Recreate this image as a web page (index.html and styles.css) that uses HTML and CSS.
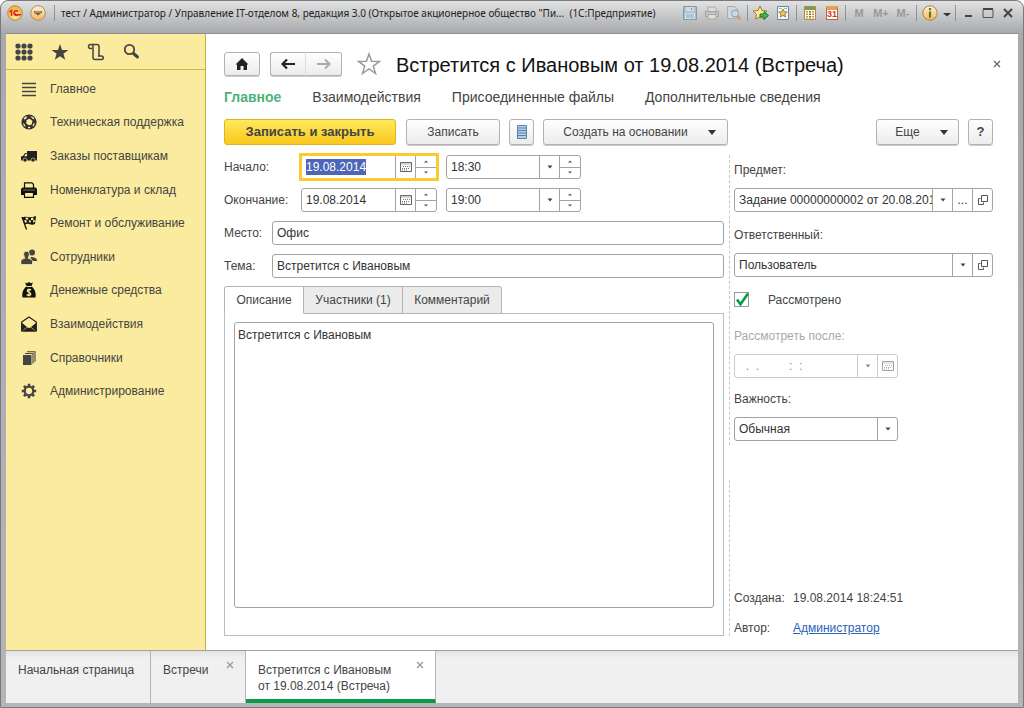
FILE: index.html
```html
<!DOCTYPE html>
<html lang="ru">
<head>
<meta charset="utf-8">
<title>Встретится с Ивановым от 19.08.2014 (Встреча)</title>
<link rel="stylesheet" href="styles.css">
</head>
<body>
<svg class="defs" aria-hidden="true">
  <symbol id="i-cal" viewBox="0 0 12 10"><path d="M.5 .5h11v9H.5z" fill="#fff" stroke="#666"/><path d="M1 2h10" stroke="#aaa"/><path d="M3 4.5h7M2 6.5h8M2 8h5" stroke="#777" stroke-dasharray="1 1"/></symbol>
  <symbol id="i-down" viewBox="0 0 6 4"><path d="M.5 .5h5L3 3.5z" fill="#444"/></symbol>
  <symbol id="i-sdown" viewBox="0 0 4 3"><path d="M0 .5h4L2 2.500z" fill="#555"/></symbol>
  <symbol id="i-sup" viewBox="0 0 4 3"><path d="M0 2.500h4L2 .5z" fill="#555"/></symbol>
  <symbol id="i-open" viewBox="0 0 10 10"><path d="M3.5 .5h6v6h-6z" fill="none" stroke="#555"/><path d="M2.500 3.500H.5v6h5V7.500" fill="none" stroke="#555"/></symbol>
  <symbol id="i-x" viewBox="0 0 8 8"><path d="M1 1l6 6M7 1L1 7" stroke="currentColor" stroke-width="1.300" fill="none"/></symbol>
</svg>
<div class="window">
  <header class="titlebar">
    <button class="tb logo" aria-label="1С"><svg width="16" height="16" viewBox="0 0 16 16"><defs><radialGradient id="gy" cx=".5" cy=".7"><stop offset="0" stop-color="#fff3a0"/><stop offset="1" stop-color="#f0b84a"/></radialGradient></defs><circle cx="8" cy="8" r="7.300" fill="url(#gy)" stroke="#b58a52"/><path d="M2.500 7l2-1.500V11M11 6.500a2.400 2.400 0 1 0 0 3.200M8.500 8.200a1 1 0 0 0 1 1.600H14" fill="none" stroke="#e0261c" stroke-width="1.500"/></svg></button>
    <button class="tb menu" aria-label="Меню"><svg width="16" height="16" viewBox="0 0 16 16"><defs><linearGradient id="go" x2="0" y2="1"><stop offset="0" stop-color="#fff2dc"/><stop offset="1" stop-color="#f3b55c"/></linearGradient></defs><circle cx="8" cy="8" r="7.300" fill="url(#go)" stroke="#b08a5e"/><path d="M4 6h8v1.500L8 10.500 4 7.500z" fill="#75583a"/><path d="M5 7h6" stroke="#e8cfa6"/></svg></button>
    <i class="sep"></i>
    <div class="caption">тест / Администратор / Управление IT-отделом 8, редакция 3.0 (Открытое акционерное общество "Пи...&nbsp; (1С:Предприятие)</div>
    <div class="tools">
      <button class="tb" aria-label="Сохранить"><svg width="16" height="16" viewBox="0 0 16 16"><path d="M1.500 1.500h13v13h-13z" fill="#a9c0cf" stroke="#7c9bb0"/><path d="M4 2h8v4.500H4z" fill="#cfdbe3"/><path d="M3 8h10v6H3z" fill="#d3dde3"/><path d="M4 10h8M4 12h8" stroke="#8fa9ba"/><path d="M9.500 3v2" stroke="#7896aa"/></svg></button>
      <button class="tb" aria-label="Печать"><svg width="16" height="16" viewBox="0 0 16 16"><path d="M4 6V2h7l1 1v3" fill="#dcdcdc" stroke="#aaa"/><path d="M1.500 6.500h13v5h-13z" fill="#c4c4c4" stroke="#a2a2a2"/><path d="M4 9.500h8V14H4z" fill="#e3dcd2" stroke="#a8a8a8"/><path d="M11 8h2" stroke="#d79c60"/></svg></button>
      <button class="tb" aria-label="Просмотр"><svg width="16" height="16" viewBox="0 0 16 16"><path d="M1.500 1.500h7l3 3v9h-10z" fill="#d4d7d9" stroke="#a5adb2"/><circle cx="9" cy="8.500" r="3.500" fill="#c6dae6" stroke="#8a9fae"/><path d="M11.500 11l3 3.500" stroke="#c39a72" stroke-width="2"/></svg></button>
      <i class="sep"></i>
      <button class="tb" aria-label="В избранное"><svg width="16" height="16" viewBox="0 0 16 16"><path d="M7 1l2 4.500 5 .5-3.500 3.500 1 4.500L7 12l-4.500 2 1-4.500L0 6l5-.5z" fill="#ffe79a" stroke="#a6762c"/><path d="M7 9h4V6.500l4.500 4-4.500 4V12H7z" fill="#3fb54a" stroke="#1c7a2b"/></svg></button>
      <button class="tb" aria-label="Избранное"><svg width="16" height="16" viewBox="0 0 16 16"><path d="M2.500 1.500h11v13h-11z" fill="#f4f8fb" stroke="#6888a4"/><path d="M4 3.500h3M9 3.500h3" stroke="#9ab3c8"/><path d="M8 4l1.200 2.800 3 .2-2.300 2 .8 3L8 10.400 5.300 12l.8-3-2.300-2 3-.2z" fill="#f6c65a" stroke="#8e6a28" stroke-width=".8"/></svg></button>
      <i class="sep"></i>
      <button class="tb" aria-label="Калькулятор"><svg width="16" height="16" viewBox="0 0 16 16"><path d="M2.500 1.500h11v13h-11z" fill="#fff6dc" stroke="#b28b4c"/><path d="M3 2h10v3H3z" fill="#6fa05a"/><path d="M5 6v8M11 6v8" stroke="#b87a3a" stroke-width="1.500" stroke-dasharray="1.500 1"/><path d="M8 6v8" stroke="#5c4630" stroke-width="1.500" stroke-dasharray="1.500 1"/></svg></button>
      <button class="tb day" aria-label="Календарь"><span class="day-box">31</span></button>
      <i class="sep"></i>
      <button class="tb mem">M</button>
      <button class="tb mem">M+</button>
      <button class="tb mem">M-</button>
      <i class="sep"></i>
      <button class="tb" aria-label="О программе"><svg width="16" height="16" viewBox="0 0 16 16"><circle cx="8" cy="8" r="7.200" fill="url(#go)" stroke="#a8834c"/><path d="M8 3v2.200M8 6.500V12.500" stroke="#5b7a2c" stroke-width="2.200"/></svg></button>
      <button class="tb narrow" aria-label="Ещё"><svg width="8" height="8" viewBox="0 0 8 8"><path d="M0 4h8L4 7.500z" fill="#333"/></svg></button>
      <i class="sep"></i>
      <button class="tb win" aria-label="Свернуть"><svg width="12" height="12" viewBox="0 0 12 12"><path d="M3 9h7" stroke="#444" stroke-width="2"/></svg></button>
      <button class="tb win" aria-label="Развернуть"><svg width="12" height="12" viewBox="0 0 12 12"><path d="M1 2.500h10v8H1z" fill="none" stroke="#555"/><path d="M1 2h10" stroke="#444" stroke-width="2"/></svg></button>
      <button class="tb win" aria-label="Закрыть"><svg width="12" height="12" viewBox="0 0 12 12"><path d="M2 2l8 8M10 2L2 10" stroke="#444" stroke-width="2"/></svg></button>
    </div>
  </header>

  <div class="client">
    <div class="work">
      <aside class="sidebar">
        <div class="quick">
          <button class="plain" aria-label="Разделы"><svg width="18" height="18" viewBox="0 0 18 18" fill="#444"><g id="r"><circle cx="3" cy="3" r="2.600"/><circle cx="9" cy="3" r="2.600"/><circle cx="15" cy="3" r="2.600"/></g><use href="#r" y="6"/><use href="#r" y="12"/></svg></button>
          <button class="plain" aria-label="Избранное"><svg width="18" height="18" viewBox="0 0 18 18"><path d="M9 1l2.100 5.900 6.300.1-5 3.800 1.800 6L9 13.200l-5.200 3.600 1.800-6-5-3.800 6.300-.1z" fill="#444"/></svg></button>
          <button class="plain" aria-label="История"><svg width="18" height="18" viewBox="0 0 18 18" fill="none" stroke="#444" stroke-width="1.500"><path d="M5 5.500H3.500a2 2 0 0 1 0-4H10a2 2 0 0 1 2 2v9.500h2.500a1.700 1.700 0 0 1 0 3.500H8a2 2 0 0 1-2-2v-11a2 2 0 0 0-2-2"/><path d="M12 13h-1"/></svg></button>
          <button class="plain" aria-label="Поиск"><svg width="18" height="18" viewBox="0 0 18 18" fill="none" stroke="#444"><circle cx="6.500" cy="6.500" r="4.700" stroke-width="1.800"/><path d="M10.500 10.500l4 3.500" stroke-width="3" stroke-linecap="round"/></svg></button>
        </div>
        <ul class="sections">
          <li><a href="#"><svg viewBox="0 0 16 16"><path d="M1 2.500h14M1 6.500h14M1 10.500h14M1 14.500h14" stroke="#444" stroke-width="1.600"/></svg>Главное</a></li>
          <li><a href="#"><svg viewBox="0 0 16 16"><circle cx="8" cy="8" r="7.600" fill="#333"/><path d="M8 4.800l1 .3 2.500 2-.8 3.400-2.700.7-2.700-1.500.2-3.400z" fill="#fcec9c"/><path d="M2.500 4.500l2-2 2 .2-2.500 3zM9.500 2l3 1.200 1.200 2.300-2.500-1zM13.800 9l-.8 2.800-1.500.6.500-2.400zM2 9l1.800 1.500.8 2.700-1.800-1.500zM7 13l2.500-.2-.8 1.500H7z" fill="#fcec9c"/></svg>Техническая поддержка</a></li>
          <li><a href="#"><svg viewBox="0 0 16 16"><path d="M6 3h10v9.500H0V8.500L2 8l2-3h2z" fill="#222"/><path d="M4.700 5.800H6v2.400H3.200z" fill="#fcec9c"/><circle cx="4" cy="12" r="2" fill="#222" stroke="#fcec9c" stroke-width=".6"/><circle cx="12" cy="12" r="2" fill="#222" stroke="#fcec9c" stroke-width=".6"/></svg>Заказы поставщикам</a></li>
          <li><a href="#"><svg viewBox="0 0 16 16"><path d="M3.500 6V.8h7.500L12.500 2.500V6" fill="#fcec9c" stroke="#111" stroke-width="1.200"/><path d="M1.500 5.500h13L16 7v6H0V7z" fill="#111"/><path d="M3.500 10.500h9v4.800h-9z" fill="#fcec9c" stroke="#111" stroke-width="1.200"/><path d="M2 8h12" stroke="#999" stroke-width=".7"/></svg>Номенклатура и склад</a></li>
          <li><a href="#"><svg viewBox="0 0 16 16"><path d="M1 2l4.500 12.500" stroke="#111" stroke-width="1.300"/><path d="M1.500 2.500C5 0 8 4 15 1l-1 8C10 11 7 7.500 4 9.500z" fill="#111"/><path d="M4.500 2.200l2.500.6.400 2-2.600-.4zM10 3l2.500-.4-.2 2.300-2.300.3zM3.300 5l2 .1.700 2.200-1.900.5zM7.600 5.200l2.200.3.100 2.300-2-.6zM12 5.500l2-.6-.3 2.200-1.700.7z" fill="#fcec9c"/></svg>Ремонт и обслуживание</a></li>
          <li><a href="#"><svg viewBox="0 0 16 16" fill="#444"><circle cx="11" cy="3.500" r="3"/><path d="M9.500 8c4 0 6.500 1 6.500 4h-5z"/><g stroke="#fcec9c" stroke-width=".8"><path d="M5.500 2.200c2.200 0 3 1.500 2.800 3.300C8.100 7.300 7.300 8 7.200 9.300c2.300.6 4.300 1.200 4.300 3.200V15.500H-.2v-3c0-2 1.800-2.600 4-3.200C3.700 8 2.900 7.300 2.700 5.500c-.2-1.800.6-3.300 2.800-3.300z"/></g></svg>Сотрудники</a></li>
          <li><a href="#"><svg viewBox="0 0 16 16"><path d="M4 .5l2 .7L8 0l2 1.200 2-.7-1.700 3.700C13 6 15.500 10 14.500 15.500h-13C.5 10 3 6 5.700 4.200z" fill="#111"/><path d="M5.500 4.500h5" stroke="#fcec9c"/><path d="M10.200 8C8 6.500 5.500 8 6.700 9.700c.9 1 3.400.8 3.200 2.500C9.600 14 7 13.800 5.700 12.500M8 6.500v8" fill="none" stroke="#fcec9c" stroke-width="1.200"/></svg>Денежные средства</a></li>
          <li><a href="#"><svg viewBox="0 0 16 16"><path d="M.7 6L8 1l7.300 5v9H.7z" fill="#fcec9c" stroke="#222" stroke-width="1.200"/><path d="M.5 6.500L6 11l-5.500 4.500zM15.500 6.500L10 11l5.500 4.500zM1 15.600l5.500-4.300L8 12.300l1.500-1L15 15.600z" fill="#222"/></svg>Взаимодействия</a></li>
          <li><a href="#"><svg viewBox="0 0 16 16"><path d="M2 5h8.500v10H2z" fill="#444"/><path d="M4 3.500h8v10M6 1.700h8v10" fill="none" stroke="#444" stroke-width="1.100"/></svg>Справочники</a></li>
          <li><a href="#"><svg viewBox="0 0 16 16"><circle cx="8" cy="8" r="4.300" fill="none" stroke="#444" stroke-width="2.300"/><path d="M8 .8v2.500M8 12.700v2.500M.8 8h2.500M12.700 8h2.500M2.900 2.900l1.800 1.800M11.300 11.300l1.800 1.800M13.100 2.900l-1.800 1.800M4.700 11.300l-1.800 1.800" stroke="#444" stroke-width="2.600"/></svg>Администрирование</a></li>
        </ul>
      </aside>

      <main class="form">
        <div class="head">
          <button class="btn home" aria-label="Домой"><svg width="14" height="14" viewBox="0 0 14 14"><path d="M7 1l6.500 6.500H12V13H8.500V9h-3v4H2V7.500H.5z" fill="#222"/></svg></button>
          <div class="pair">
            <button class="btn" aria-label="Назад"><svg width="14" height="12" viewBox="0 0 14 12"><path d="M1 6h13M6 1.500L1.500 6 6 10.500" stroke="#222" stroke-width="2.200" fill="none"/></svg></button>
            <button class="btn" aria-label="Вперед"><svg width="14" height="12" viewBox="0 0 14 12"><path d="M0 6h13M8 1.500L12.500 6 8 10.500" stroke="#aaa" stroke-width="2" fill="none"/></svg></button>
          </div>
          <button class="plain star" aria-label="Избранное"><svg width="24" height="24" viewBox="0 0 24 24"><path d="M12 2l2.600 7.200 7.900.2-6.200 4.700 2.200 7.400L12 17l-6.500 4.500 2.200-7.400L1.500 9.400l7.900-.2z" fill="#fff" stroke="#999" stroke-width="1.500"/></svg></button>
          <h1>Встретится с Ивановым от 19.08.2014 (Встреча)</h1>
          <button class="plain close" aria-label="Закрыть"><svg width="8" height="8"><use href="#i-x"/></svg></button>
        </div>
        <nav class="links">
          <a class="on" href="#">Главное</a><a href="#">Взаимодействия</a><a href="#">Присоединенные файлы</a><a href="#">Дополнительные сведения</a>
        </nav>
        <div class="commands">
          <button class="btn primary">Записать и закрыть</button>
          <button class="btn save">Записать</button>
          <button class="btn list" aria-label="Список"><svg width="12" height="16" viewBox="0 0 12 16"><path d="M1.500 1.500h9v13h-9z" fill="#b4d0e8" stroke="#5b83ab"/><path d="M2 4h8M2 6.500h8M2 9h8M2 11.500h8" stroke="#5b83ab"/></svg></button>
          <button class="btn create">Создать на основании<svg width="8" height="5" viewBox="0 0 8 5"><path d="M0 0h8L4 5z" fill="#333"/></svg></button>
          <button class="btn more">Еще<svg width="8" height="5" viewBox="0 0 8 5"><path d="M0 0h8L4 5z" fill="#333"/></svg></button>
          <button class="btn help">?</button>
        </div>

        <div class="body">
          <div class="left">
            <div class="row">
              <label class="wide" for="d1">Начало:</label>
              <div class="field date focus"><input id="d1" value="19.08.2014"><button class="cell cal" aria-label="Календарь"><svg width="12" height="10"><use href="#i-cal"/></svg></button><div class="spin"><button aria-label="Больше"><svg width="4" height="3"><use href="#i-sup"/></svg></button><button aria-label="Меньше"><svg width="4" height="3"><use href="#i-sdown"/></svg></button></div></div>
              <div class="field time"><input aria-label="Время начала" value="18:30"><button class="cell" aria-label="Выбрать"><svg width="6" height="4"><use href="#i-down"/></svg></button><div class="spin"><button aria-label="Больше"><svg width="4" height="3"><use href="#i-sup"/></svg></button><button aria-label="Меньше"><svg width="4" height="3"><use href="#i-sdown"/></svg></button></div></div>
            </div>
            <div class="row">
              <label class="wide" for="d2">Окончание:</label>
              <div class="field date"><input id="d2" value="19.08.2014"><button class="cell cal" aria-label="Календарь"><svg width="12" height="10"><use href="#i-cal"/></svg></button><div class="spin"><button aria-label="Больше"><svg width="4" height="3"><use href="#i-sup"/></svg></button><button aria-label="Меньше"><svg width="4" height="3"><use href="#i-sdown"/></svg></button></div></div>
              <div class="field time"><input aria-label="Время окончания" value="19:00"><button class="cell" aria-label="Выбрать"><svg width="6" height="4"><use href="#i-down"/></svg></button><div class="spin"><button aria-label="Больше"><svg width="4" height="3"><use href="#i-sup"/></svg></button><button aria-label="Меньше"><svg width="4" height="3"><use href="#i-sdown"/></svg></button></div></div>
            </div>
            <div class="row"><label for="place">Место:</label><div class="field grow"><input id="place" value="Офис"></div></div>
            <div class="row"><label for="subj">Тема:</label><div class="field grow"><input id="subj" value="Встретится с Ивановым"></div></div>
            <div class="tabs" role="tablist">
              <button class="tab on" role="tab">Описание</button><button class="tab" role="tab">Участники (1)</button><button class="tab" role="tab">Комментарий</button>
            </div>
            <div class="panel"><textarea aria-label="Описание">Встретится с Ивановым</textarea></div>
          </div>

          <div class="right">
            <div class="group props">
              <label for="item">Предмет:</label>
              <div class="field"><input id="item" value="Задание 00000000002 от 20.08.2014"><button class="cell" aria-label="Выбрать"><svg width="6" height="4"><use href="#i-down"/></svg></button><button class="cell dots">...</button><button class="cell" aria-label="Открыть"><svg width="10" height="10"><use href="#i-open"/></svg></button></div>
              <label for="resp">Ответственный:</label>
              <div class="field"><input id="resp" value="Пользователь"><button class="cell" aria-label="Выбрать"><svg width="6" height="4"><use href="#i-down"/></svg></button><button class="cell" aria-label="Открыть"><svg width="10" height="10"><use href="#i-open"/></svg></button></div>
              <label class="check"><span class="box"><input type="checkbox" checked><svg width="16" height="16" viewBox="0 0 16 16"><path d="M3 7.500l3.500 4.800L14 1.500" fill="none" stroke="#0a9a48" stroke-width="2.600"/></svg></span>Рассмотрено</label>
              <label class="off" for="after">Рассмотреть после:</label>
              <div class="field short disabled"><input id="after" value="  .  .         :  :" disabled><button class="cell" disabled aria-label="Выбрать"><svg width="6" height="4"><use href="#i-down"/></svg></button><button class="cell" disabled aria-label="Календарь"><svg width="12" height="10"><use href="#i-cal"/></svg></button></div>
              <label for="prio">Важность:</label>
              <div class="field short"><select id="prio"><option>Обычная</option></select><span class="cell"><svg width="6" height="4"><use href="#i-down"/></svg></span></div>
            </div>
            <div class="group meta">
              <dl><dt>Создана:</dt><dd>19.08.2014 18:24:51</dd><dt>Автор:</dt><dd><a href="#">Администратор</a></dd></dl>
            </div>
          </div>
        </div>
      </main>
    </div>

    <footer class="taskbar">
      <div class="task start"><span>Начальная страница</span></div>
      <div class="task list-task"><span>Встречи</span><button class="plain" aria-label="Закрыть"><svg width="8" height="8"><use href="#i-x"/></svg></button></div>
      <div class="task on"><span>Встретится с Ивановым<br>от 19.08.2014 (Встреча)</span><button class="plain" aria-label="Закрыть"><svg width="8" height="8"><use href="#i-x"/></svg></button></div>
    </footer>
  </div>
</div>
<script src="script.js"></script>
</body>
</html>
```
FILE: styles.css
```css
* { box-sizing: border-box; }
body { margin: 0; background: #fff; font: 12px/16px "Liberation Sans", Arial, sans-serif; color: #444; }
button, input, select, textarea { font: inherit; color: inherit; margin: 0; padding: 0; border: 0; border-radius: 0; background: none; }
input, textarea, select, button { outline: none; }
svg { display: block; flex: none; }
a { color: inherit; text-decoration: none; }
.defs { position: absolute; width: 0; height: 0; }

.window { min-height: 100vh; display: flex; flex-direction: column; padding: 0 5px 4px; border: 1px solid #77797c; border-radius: 8px 8px 0 0; background: linear-gradient(#e2e2e2, #a7a9ac 32px, #b4b5b7); }
.titlebar { display: flex; align-items: center; height: 32px; padding-bottom: 9px; font-size: 11px; color: #222; }
.tb { display: flex; align-items: center; justify-content: center; width: 22px; height: 22px; }
.logo { width: 17px; }
.menu { width: 29px; }
.sep { width: 1px; height: 16px; background: #8f9193; margin: 0 2px; }
.caption { flex: 1; min-width: 0; padding-left: 4px; font-family: "Noto Sans", sans-serif; font-size: 10px; white-space: nowrap; overflow: hidden; }
.tools { display: flex; align-items: center; }
.narrow { width: 12px; }
.win { width: 20px; }
.day-box { width: 12px; height: 14px; border: 1px solid #b06a3a; border-top: 4px solid #e8a04c; background: #fff; font-size: 9px; line-height: 9px; color: #d03a1c; font-weight: bold; text-align: center; }
.mem { font-weight: bold; color: #98999b; }

.client { flex: 1; display: flex; flex-direction: column; border-top: 1px solid #8c8e90; background: #fff; }
.work { flex: 1; display: flex; min-height: 0; }

.sidebar { width: 200px; background: #fbeb9e; border-right: 1px solid #c6ae3a; }
.quick { display: flex; gap: 18px; height: 36px; padding: 0 9px; align-items: center; border-bottom: 1px solid #d0b540; }
.sections { list-style: none; margin: 0; padding: 2px 0 0 15px; display: grid; grid-auto-rows: 1fr; height: 338px; }
.sections a { display: flex; align-items: center; gap: 13px; height: 100%; }
.sections svg { width: 16px; height: 16px; }

.form { flex: 1; min-width: 0; display: flex; flex-direction: column; padding: 18px 25px 14px 18px; }
.head { display: flex; align-items: center; height: 24px; }
.btn { display: flex; align-items: center; justify-content: center; border: 1px solid #b2b2b2; border-radius: 3px; background: linear-gradient(#fff, #ececec); box-shadow: 0 1px 0 #ccc; }
.head .btn { width: 36px; height: 24px; }
.pair { display: flex; margin: 0 15px 0 10px; }
.pair .btn:first-child { border-radius: 3px 0 0 3px; border-right-color: #ddd; }
.pair .btn:last-child { border-radius: 0 3px 3px 0; border-left: 0; }
h1 { flex: 1; margin: 2px 0 0 15px; font-size: 20px; line-height: 24px; font-weight: normal; color: #111; white-space: nowrap; }
.close { margin-right: -8px; color: #666; }
.links { display: flex; gap: 31px; margin-top: 12px; font-size: 14px; line-height: 18px; white-space: nowrap; }
.links .on { color: #4db27a; font-weight: bold; }
.commands { display: flex; margin-top: 13px; }
.commands .btn { height: 26px; margin-right: 9px; white-space: nowrap; }
.commands .primary { width: 172px; margin-right: 10px; border-color: #e0b420; background: linear-gradient(#ffe95c, #f9c81c); font-size: 13px; font-weight: bold; box-shadow: none; }
.commands .save { width: 94px; }
.commands .list { width: 25px; }
.commands .create { width: 185px; gap: 20px; padding-left: 8px; }
.commands .more { width: 83px; gap: 20px; margin-left: auto; padding-left: 8px; }
.commands .help { width: 25px; margin-right: 0; font-size: 13px; font-weight: bold; }

.body { flex: 1; display: flex; gap: 5px; margin-top: 10px; }
.left { flex: 1; min-width: 0; display: flex; flex-direction: column; gap: 9px; }
.row { display: flex; align-items: center; }
.row label { width: 48px; }
.row label.wide { width: 77px; }
.field { display: flex; height: 24px; border: 1px solid #a3a3a3; border-radius: 3px; background: #fff; color: #333; }
.field input, .field select { flex: 1; width: 0; min-width: 0; padding-left: 4px; appearance: none; }
.grow { flex: 1; }
.date { width: 136px; margin-right: 9px; }
.time { width: 135px; }
.focus { outline: 3px solid #fbcb2c; border-color: #fff; border-radius: 0; outline-offset: -1px; }
input::selection { background: #4c66b8; color: #fff; }
.cell { display: flex; align-items: center; justify-content: center; width: 20px; border-left: 1px solid #a3a3a3; }
.spin { display: flex; flex-direction: column; width: 21px; border-left: 1px solid #a3a3a3; }
.spin button { flex: 1; display: flex; align-items: center; justify-content: center; }
.spin button + button { border-top: 1px solid #a3a3a3; }

.tabs { display: flex; height: 28px; margin: -1px 0 -10px; z-index: 1; }
.tab { min-width: 99px; padding: 0 10px; border: 1px solid #b4b4b4; border-left: 0; background: #ebebeb; white-space: nowrap; }
.tab.on { min-width: 80px; border-left: 1px solid #b4b4b4; border-bottom-color: #fff; border-top-left-radius: 3px; background: #fff; }
.tab:last-child { border-top-right-radius: 3px; }
.panel { flex: 1; display: flex; padding: 8px 9px 27px; border: 1px solid #bdbdbd; }
textarea { flex: 1; resize: none; padding: 4px 3px; border: 1px solid #a3a3a3; border-radius: 3px; color: #333; }

.right { width: 264px; display: flex; flex-direction: column; justify-content: space-between; }
.group { border-left: 1px dashed #c8c8c8; padding-left: 4px; }
.props { display: flex; flex-direction: column; padding-top: 7px; padding-bottom: 4px; }
.props .field { margin: 10px 0 15px; }
.props .short { width: 164px; margin: 10px 0 13px; }
.props .short:last-child { margin-bottom: 0; }
.check { display: flex; align-items: center; gap: 18px; margin-bottom: 20px; }
.box { position: relative; width: 16px; height: 16px; }
.box input { display: block; width: 15px; height: 15px; border: 1px solid #999; appearance: none; }
.box svg { position: absolute; left: 0; top: 0; }
.off { color: #a9a9a9; }
.disabled, .disabled .cell { border-color: #ccc; }
.disabled input { color: #888; white-space: pre; }
.disabled svg { opacity: 0.6; }
.meta { padding-top: 110px; }
.meta dl { display: grid; grid-template-columns: 59px 1fr; row-gap: 14px; margin: 0; }
.meta dd { margin: 0; }
.meta a { color: #2a62b8; text-decoration: underline; }

.taskbar { display: flex; height: 53px; border-top: 1px solid #a0a0a0; background: linear-gradient(#e2e2e2, #f0f0f0 7px); }
.task { display: flex; align-items: flex-start; justify-content: space-between; padding: 11px 13px 0 12px; border-right: 1px solid #b5b5b5; white-space: nowrap; }
.task .plain { color: #999; margin: -1px -2px 0 0; }
.start { min-width: 145px; }
.list-task { min-width: 95px; }
.task.on { min-width: 190px; background: #fff; border-bottom: 4px solid #0a9a48; }
```
FILE: script.js
```js
const start = document.getElementById('d1');
start.focus();
start.select();
```
